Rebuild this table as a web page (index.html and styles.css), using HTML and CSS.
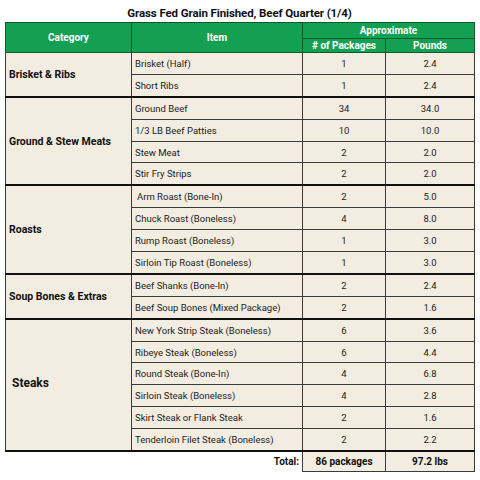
FILE: index.html
```html
<!DOCTYPE html>
<html>
<head>
  <link rel="stylesheet" href="styles.css">
</head>
<body>
  <div class="sheet">
    <h1 class="title">Grass Fed Grain Finished, Beef Quarter (1/4)</h1>

    <table class="beef">
      <colgroup>
        <col class="col-cat">
        <col class="col-item">
        <col class="col-pkg">
        <col class="col-lbs">
      </colgroup>
      <thead>
        <tr class="head-top">
          <th rowspan="2">Category</th>
          <th rowspan="2">Item</th>
          <th colspan="2">Approximate</th>
        </tr>
        <tr class="head-sub">
          <th># of Packages</th>
          <th>Pounds</th>
        </tr>
      </thead>

      <tbody class="group">
        <tr>
          <td class="cat" rowspan="2">Brisket &amp; Ribs</td>
          <td class="item">Brisket (Half)</td><td>1</td><td>2.4</td>
        </tr>
        <tr><td class="item">Short Ribs</td><td>1</td><td>2.4</td></tr>
      </tbody>

      <tbody class="group">
        <tr>
          <td class="cat" rowspan="4">Ground &amp; Stew Meats</td>
          <td class="item">Ground Beef</td><td>34</td><td>34.0</td>
        </tr>
        <tr><td class="item">1/3 LB Beef Patties</td><td>10</td><td>10.0</td></tr>
        <tr><td class="item">Stew Meat</td><td>2</td><td>2.0</td></tr>
        <tr><td class="item">Stir Fry Strips</td><td>2</td><td>2.0</td></tr>
      </tbody>

      <tbody class="group">
        <tr>
          <td class="cat" rowspan="4">Roasts</td>
          <td class="item indent">Arm Roast (Bone-In)</td><td>2</td><td>5.0</td>
        </tr>
        <tr><td class="item">Chuck Roast (Boneless)</td><td>4</td><td>8.0</td></tr>
        <tr><td class="item">Rump Roast (Boneless)</td><td>1</td><td>3.0</td></tr>
        <tr><td class="item">Sirloin Tip Roast (Boneless)</td><td>1</td><td>3.0</td></tr>
      </tbody>

      <tbody class="group">
        <tr>
          <td class="cat" rowspan="2">Soup Bones &amp; Extras</td>
          <td class="item">Beef Shanks (Bone-In)</td><td>2</td><td>2.4</td>
        </tr>
        <tr><td class="item">Beef Soup Bones (Mixed Package)</td><td>2</td><td>1.6</td></tr>
      </tbody>

      <tbody class="group">
        <tr>
          <td class="cat big" rowspan="6">Steaks</td>
          <td class="item">New York Strip Steak (Boneless)</td><td>6</td><td>3.6</td>
        </tr>
        <tr><td class="item">Ribeye Steak (Boneless)</td><td>6</td><td>4.4</td></tr>
        <tr><td class="item">Round Steak (Bone-In)</td><td>4</td><td>6.8</td></tr>
        <tr><td class="item">Sirloin Steak (Boneless)</td><td>4</td><td>2.8</td></tr>
        <tr><td class="item">Skirt Steak or Flank Steak</td><td>2</td><td>1.6</td></tr>
        <tr><td class="item">Tenderloin Filet Steak (Boneless)</td><td>2</td><td>2.2</td></tr>
      </tbody>

      <tfoot>
        <tr class="total">
          <td class="blank"></td>
          <td class="total-label">Total:</td>
          <td class="sum">86 packages</td>
          <td class="sum">97.2 lbs</td>
        </tr>
      </tfoot>
    </table>
  </div>
</body>
</html>
```

FILE: styles.css
```css
body {
  margin: 0;
  background-color: white;
  font-family: Roboto, "Liberation Sans", sans-serif;
  color: #1c1c1c;
}

.sheet {
  width: 469px;
  padding: 7px 5px 0 5px;
}

.title {
  margin: 0 0 3px 0;
  font-size: 11.5px;
  line-height: 12px;
  font-weight: bold;
  text-align: center;
  color: #111;
  letter-spacing: -0.1px;
}

.beef {
  width: 469px;
  border-collapse: collapse;
  table-layout: fixed;
  font-size: 9.5px;
}

.col-cat { width: 126px; }
.col-item { width: 171px; }
.col-pkg { width: 83px; }
.col-lbs { width: 89px; }

/* header */
.beef th {
  background-color: #14a052;
  color: white;
  font-weight: bold;
  font-size: 10px;
  border: 1px solid #0d5a2c;
  padding: 0;
}

.head-top th { height: 15px; }
.head-sub th { height: 13px; }

/* body */
.beef td {
  background-color: #f2ece1;
  border: 1px solid #3a3a3a;
  height: 20.9px;
  padding: 0;
  text-align: center;
}

.beef td.item {
  text-align: left;
  padding-left: 3px;
}

.beef td.indent {
  padding-left: 5px;
}

.beef td.cat {
  text-align: left;
  padding-left: 3px;
  font-weight: bold;
  font-size: 10.5px;
  color: #111;
}

.beef td.big {
  font-size: 12px;
  padding-left: 6px;
  padding-bottom: 4px;
}

.group {
  border-bottom: 2px solid #111;
}

/* total row */
.total td {
  height: 19px;
}

.beef td.blank,
.beef td.total-label {
  background-color: white;
  border-bottom: hidden;
}

.beef td.blank {
  border-left: hidden;
  border-right: hidden;
}

.beef td.total-label {
  text-align: right;
  padding-right: 3px;
  font-weight: bold;
  font-size: 10px;
  color: #111;
}

.beef td.sum {
  font-weight: bold;
  font-size: 10px;
  color: #111;
}
```
